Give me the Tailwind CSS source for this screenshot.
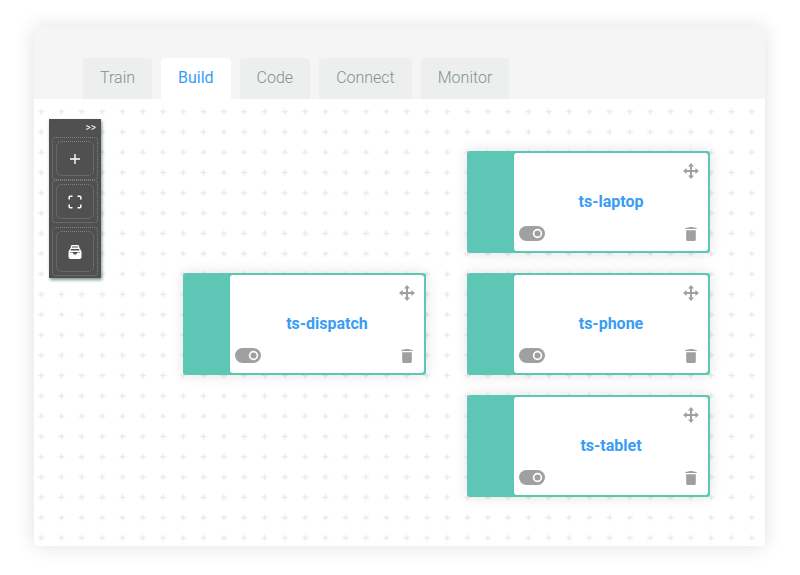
<!DOCTYPE html>
<html lang="en">
<head>
<meta charset="utf-8">
<meta name="viewport" content="width=device-width, initial-scale=1">
<title>Build</title>
<script src="https://cdn.jsdelivr.net/npm/@tailwindcss/browser@4"></script>
</head>
<body class="flex min-h-screen flex-col bg-white pt-[27px] pr-[35px] pb-[29px] pl-[34px] font-['Roboto','Liberation_Sans',sans-serif]">
<svg class="hidden" aria-hidden="true">
  <symbol id="move" viewBox="0 0 16 16"><path fill="currentColor" d="M8 0l3 3.600H9v3.400h3.400V5L16 8l-3.600 3V9H9v3.400h2L8 16l-3-3.600h2V9H3.600v2L0 8l3.600-3v2H7V3.600H5z"/></symbol>
  <symbol id="toggle" viewBox="0 0 26 15"><rect width="26" height="15" rx="7.500" fill="currentColor"/><circle cx="18.500" cy="7.500" r="3.900" fill="none" stroke="#fff" stroke-width="1.700"/></symbol>
  <symbol id="trash" viewBox="0 0 12 14"><path fill="currentColor" d="M4 0h4l.8.8H11a.7.7 0 0 1 .7.700V2H.3v-.500A.7.700 0 0 1 1 .8h2.200zM1.200 3.200h9.600V12.500a1.500 1.500 0 0 1-1.500 1.500H2.700a1.500 1.500 0 0 1-1.500-1.500z"/></symbol>
</svg>
<main class="flex grow flex-col rounded-sm bg-white shadow-[0_0_20px_rgba(0,0,0,0.13)]">
  <nav class="flex gap-[9px] rounded-t-sm bg-[#f5f5f5] pt-[31px] pl-[49px] text-base leading-6 font-light text-[#84918f]" aria-label="Sections">
    <a href="#train" class="rounded-t-sm bg-[#edefee] px-[17px] pt-2 pb-[9px]">Train</a>
    <a href="#build" aria-current="page" class="rounded-t-sm bg-white px-[17px] pt-2 pb-[9px] font-normal text-[#3a9cf5]">Build</a>
    <a href="#code" class="rounded-t-sm bg-[#edefee] px-[17px] pt-2 pb-[9px]">Code</a>
    <a href="#connect" class="rounded-t-sm bg-[#edefee] px-[17px] pt-2 pb-[9px]">Connect</a>
    <a href="#monitor" class="rounded-t-sm bg-[#edefee] px-[17px] pt-2 pb-[9px]">Monitor</a>
  </nav>
  <section class="relative grow overflow-hidden" aria-label="Canvas">
    <svg class="absolute inset-0 h-full w-full" aria-hidden="true">
      <defs><pattern id="grid" x="-3" y="2.500" width="20.300" height="20.300" patternUnits="userSpaceOnUse"><path d="M7.200 10.150h6M10.200 7.150v6" stroke="#e9e9e9" stroke-width="1.400"/></pattern></defs>
      <rect width="100%" height="100%" fill="url(#grid)"/>
    </svg>

    <div class="absolute top-5 left-[15px] flex w-[52px] flex-col bg-[#505050] px-[3px] pb-0.5 text-white shadow-[1px_2px_3px_rgba(0,50,50,0.5)]" role="toolbar" aria-label="Tools">
      <button class="h-[18px] pr-0.5 text-right text-[10px] leading-[18px]" aria-label="Expand toolbar">&gt;&gt;</button>
      <button class="h-[43px] rounded-sm border border-dotted border-[#808080] p-[3px]" aria-label="Add">
        <span class="flex h-full items-center justify-center rounded-md border border-dotted border-[#808080]"><svg class="size-[14px]" viewBox="0 0 14 14" fill="none" stroke="currentColor" stroke-width="1.400"><path d="M7 2v10M2 7h10"/></svg></span>
      </button>
      <button class="h-[43px] rounded-sm border border-dotted border-[#808080] p-[3px]" aria-label="Fit to screen">
        <span class="flex h-full items-center justify-center rounded-md border border-dotted border-[#808080]"><svg class="size-[14px]" viewBox="0 0 14 14" fill="none" stroke="currentColor" stroke-width="1.500"><path d="M1.200 4.500V2.200a1 1 0 0 1 1-1h2.300M9.500 1.200h2.300a1 1 0 0 1 1 1v2.300M12.800 9.500v2.300a1 1 0 0 1-1 1H9.500M4.500 12.800H2.200a1 1 0 0 1-1-1V9.500"/></svg></span>
      </button>
      <button class="mt-1 h-[49px] rounded-sm border border-dotted border-[#808080] p-[3px]" aria-label="Archive">
        <span class="flex h-full items-center justify-center rounded-md border border-dotted border-[#808080]"><svg class="size-[14px]" viewBox="0 0 14 14" fill="currentColor"><path fill-rule="evenodd" d="M4 0h6a1 1 0 0 1 1 1l.5 2 2 3.500V12a2 2 0 0 1-2 2h-9a2 2 0 0 1-2-2V6.500L2.500 3 3 1a1 1 0 0 1 1-1zM3.800 1.400v1h6.400v-1zM3 4l-.5 1.600h9L11 4zM2 7.600h2.500L6 9.500h2l1.500-1.900H12v-.700H2z"/></svg></span>
      </button>
    </div>

    <article class="absolute top-[174px] left-[149px] flex h-[102px] w-[243px] rounded-[3px] bg-[#5ec6b5] py-0.5 pr-0.5 pl-[47px] text-[#a0a0a0] shadow-[0_0_14px_rgba(0,0,0,0.12)]">
      <div class="grid grow grid-cols-2 grid-rows-[1fr_auto_1fr] rounded-[3px] bg-white px-[5px] py-2.5">
        <button class="col-start-2 self-start justify-self-end pr-1" aria-label="Move ts-dispatch"><svg class="size-4"><use href="#move"/></svg></button>
        <h2 class="col-span-2 text-center text-base leading-5 font-bold text-[#3a9cf5]">ts-dispatch</h2>
        <button class="self-end justify-self-start" aria-label="Toggle ts-dispatch"><svg class="h-[15px] w-[26px]"><use href="#toggle"/></svg></button>
        <button class="self-end justify-self-end pr-1.5" aria-label="Delete ts-dispatch"><svg class="h-[14px] w-3"><use href="#trash"/></svg></button>
      </div>
    </article>

    <div class="absolute top-[52px] left-[433px] flex flex-col gap-5 text-[#a0a0a0]">
      <article class="flex h-[102px] w-[243px] rounded-[3px] bg-[#5ec6b5] py-0.5 pr-0.5 pl-[47px] shadow-[0_0_14px_rgba(0,0,0,0.12)]">
        <div class="grid grow grid-cols-2 grid-rows-[1fr_auto_1fr] rounded-[3px] bg-white px-[5px] py-2.5">
          <button class="col-start-2 self-start justify-self-end pr-1" aria-label="Move ts-laptop"><svg class="size-4"><use href="#move"/></svg></button>
          <h2 class="col-span-2 text-center text-base leading-5 font-bold text-[#3a9cf5]">ts-laptop</h2>
          <button class="self-end justify-self-start" aria-label="Toggle ts-laptop"><svg class="h-[15px] w-[26px]"><use href="#toggle"/></svg></button>
          <button class="self-end justify-self-end pr-1.5" aria-label="Delete ts-laptop"><svg class="h-[14px] w-3"><use href="#trash"/></svg></button>
        </div>
      </article>
      <article class="flex h-[102px] w-[243px] rounded-[3px] bg-[#5ec6b5] py-0.5 pr-0.5 pl-[47px] shadow-[0_0_14px_rgba(0,0,0,0.12)]">
        <div class="grid grow grid-cols-2 grid-rows-[1fr_auto_1fr] rounded-[3px] bg-white px-[5px] py-2.5">
          <button class="col-start-2 self-start justify-self-end pr-1" aria-label="Move ts-phone"><svg class="size-4"><use href="#move"/></svg></button>
          <h2 class="col-span-2 text-center text-base leading-5 font-bold text-[#3a9cf5]">ts-phone</h2>
          <button class="self-end justify-self-start" aria-label="Toggle ts-phone"><svg class="h-[15px] w-[26px]"><use href="#toggle"/></svg></button>
          <button class="self-end justify-self-end pr-1.5" aria-label="Delete ts-phone"><svg class="h-[14px] w-3"><use href="#trash"/></svg></button>
        </div>
      </article>
      <article class="flex h-[102px] w-[243px] rounded-[3px] bg-[#5ec6b5] py-0.5 pr-0.5 pl-[47px] shadow-[0_0_14px_rgba(0,0,0,0.12)]">
        <div class="grid grow grid-cols-2 grid-rows-[1fr_auto_1fr] rounded-[3px] bg-white px-[5px] py-2.5">
          <button class="col-start-2 self-start justify-self-end pr-1" aria-label="Move ts-tablet"><svg class="size-4"><use href="#move"/></svg></button>
          <h2 class="col-span-2 text-center text-base leading-5 font-bold text-[#3a9cf5]">ts-tablet</h2>
          <button class="self-end justify-self-start" aria-label="Toggle ts-tablet"><svg class="h-[15px] w-[26px]"><use href="#toggle"/></svg></button>
          <button class="self-end justify-self-end pr-1.5" aria-label="Delete ts-tablet"><svg class="h-[14px] w-3"><use href="#trash"/></svg></button>
        </div>
      </article>
    </div>
  </section>
</main>
</body>
</html>
